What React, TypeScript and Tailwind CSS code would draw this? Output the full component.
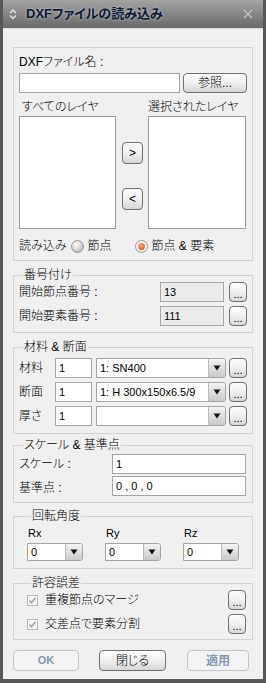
import React from 'react';

const btnFace = 'bg-linear-to-b from-[#fdfdfd] via-[#f0f0f0] to-[#d6d6d6] border border-[#707070]';

const Arrow: React.FC = () => (
   <svg width="8" height="6" viewBox="0 0 8 6" aria-hidden="true">
      <path d="M0.5 0.5 H7.5 L4 5.5 Z" fill="#111" />
   </svg>
);

const Dots: React.FC<{ h?: string }> = ({ h = 'h-[20px]' }) => (
   <button
      className={`${btnFace} w-[18px] ${h} rounded-[4px] shrink-0 flex items-end justify-center pb-[2px] text-[11px] leading-[10px] text-black`}
   >
      ...
   </button>
);

const Select: React.FC<{ value: string; w: string; h?: string }> = ({ value, w, h = 'h-[20px]' }) => (
   <div className={`flex ${w} ${h} shrink-0 border border-[#a5a5a5] bg-white rounded-r-[3px]`}>
      <span className="flex-1 px-[3px] text-[11px] flex items-center whitespace-nowrap overflow-hidden">
         {value}
      </span>
      <span className="w-[17px] border-l border-[#bcbcbc] bg-linear-to-b from-[#f4f4f4] to-[#c9c9c9] rounded-r-[2px] flex items-center justify-center">
         <Arrow />
      </span>
   </div>
);

const Group: React.FC<{ title: string; className?: string; children: React.ReactNode }> = ({
   title,
   className = '',
   children,
}) => (
   <fieldset className={`min-w-0 w-full border border-[#d3d3d3] ${className}`}>
      <legend className="ml-[4px] px-[1px] text-[12px] leading-[14px]">{title}</legend>
      {children}
   </fieldset>
);

const Radio: React.FC<{ checked?: boolean }> = ({ checked }) => (
   <svg width="13" height="13" viewBox="0 0 13 13" aria-hidden="true">
      <defs>
         <radialGradient id="rg" cx="40%" cy="35%" r="70%">
            <stop offset="0" stopColor="#ffffff" />
            <stop offset="1" stopColor="#b4b4b4" />
         </radialGradient>
         <radialGradient id="ro" cx="40%" cy="35%" r="70%">
            <stop offset="0" stopColor="#ffb27a" />
            <stop offset="1" stopColor="#e8501a" />
         </radialGradient>
      </defs>
      <circle cx="6.5" cy="6.5" r="6" fill={checked ? '#f3f3f3' : 'url(#rg)'} stroke="#9a9a9a" />
      {checked && <circle cx="6.5" cy="6.5" r="3.4" fill="url(#ro)" />}
   </svg>
);

const Check: React.FC = () => (
   <span className="w-[11px] h-[11px] shrink-0 border border-[#b8b8b8] bg-[#f6f6f6] flex items-center justify-center">
      <svg width="9" height="9" viewBox="0 0 9 9" aria-hidden="true">
         <path d="M1.5 4.5 L3.5 6.8 L7.5 1.8" fill="none" stroke="#a3a3a3" strokeWidth="1.6" />
      </svg>
   </span>
);

const App: React.FC = () => {
   return (
      <div className="w-[266px] h-[683px] flex flex-col bg-[#585858] px-[3px] pb-[4px] text-black font-light font-['Liberation_Sans','Noto_Sans_CJK_JP',sans-serif] [font-feature-settings:'palt'] overflow-hidden">
         {/* title bar */}
         <div className="h-[29px] shrink-0 flex items-center pl-[6px] pr-[10px] bg-linear-to-b from-[#a4a4a4] to-[#6a6a6a] border-b border-[#dcdcdc]">
            <svg width="8" height="12" viewBox="0 0 8 12" aria-hidden="true">
               <path d="M1 5 L4 2 L7 5 M1 7.5 L4 10.5 L7 7.5" fill="none" stroke="#e4e4e4" strokeWidth="1.4" />
            </svg>
            <span className="ml-[9px] text-[13px] font-bold text-[#0c1936] [text-shadow:0_0_3px_rgba(255,255,255,0.55)]">
               DXFファイルの読み込み
            </span>
            <svg className="ml-auto" width="10" height="10" viewBox="0 0 10 10" aria-hidden="true">
               <path d="M1 1 L9 9 M9 1 L1 9" stroke="#c4c4c4" strokeWidth="1.3" />
            </svg>
         </div>

         {/* body */}
         <div className="flex-1 flex flex-col bg-[#f0f0f0] px-[10px] pt-[18px] text-[12px]">
            <div className="border border-[#d3d3d3] pl-[5px] pr-[5px] pt-[6px] pb-[6px]">
               <div className="leading-[16px]">DXFファイル名 :</div>
               <div className="flex mt-[3px] gap-[3px]">
                  <div className="w-[161px] h-[20px] border border-[#a5a5a5] bg-white" />
                  <button className={`${btnFace} w-[64px] h-[20px] rounded-[4px] text-[12px] leading-[16px]`}>
                     参照...
                  </button>
               </div>
               <div className="flex mt-[6px] leading-[16px]">
                  <span className="w-[129px] pl-[3px]">すべてのレイヤ</span>
                  <span>選択されたレイヤ</span>
               </div>
               <div className="flex mt-[1px]">
                  <div className="w-[97px] h-[113px] border border-[#9c9c9c] bg-white" />
                  <div className="ml-[6px] w-[21px] flex flex-col pt-[26px] gap-[24px]">
                     <button className={`${btnFace} w-[21px] h-[22px] rounded-[4px] text-[12px]`}>&gt;</button>
                     <button className={`${btnFace} w-[21px] h-[22px] rounded-[4px] text-[12px]`}>&lt;</button>
                  </div>
                  <div className="ml-[5px] w-[98px] h-[113px] border border-[#9c9c9c] bg-white" />
               </div>
               <div className="flex items-center mt-[9px] h-[16px]">
                  <span>読み込み</span>
                  <span className="ml-[5px] flex items-center">
                     <Radio />
                  </span>
                  <span className="ml-[3px]">節点</span>
                  <span className="ml-[23px] flex items-center">
                     <Radio checked />
                  </span>
                  <span className="ml-[4px]">節点 &amp; 要素</span>
               </div>
            </div>

            <Group title="番号付け" className="mt-[7px] pl-[5px] pr-[5px] pb-[6px]">
               <div className="flex items-center h-[20px]">
                  <span className="flex-1">開始節点番号 :</span>
                  <div className="w-[64px] h-[20px] border border-[#a9a9a9] bg-[#ececec] px-[3px] text-[11px] flex items-center">
                     13
                  </div>
                  <span className="ml-[5px]">
                     <Dots />
                  </span>
               </div>
               <div className="flex items-center h-[20px] mt-[4px]">
                  <span className="flex-1">開始要素番号 :</span>
                  <div className="w-[64px] h-[20px] border border-[#a9a9a9] bg-[#ececec] px-[3px] text-[11px] flex items-center">
                     111
                  </div>
                  <span className="ml-[5px]">
                     <Dots />
                  </span>
               </div>
            </Group>

            <Group title="材料 & 断面" className="mt-[7px] pl-[5px] pr-[5px] pt-[4px] pb-[7px]">
               {[
                  ['材料', '1: SN400'],
                  ['断面', '1: H 300x150x6.5/9'],
                  ['厚さ', ''],
               ].map(([label, value], i) => (
                  <div key={label} className={`flex items-center h-[20px] ${i > 0 ? 'mt-[4px]' : ''}`}>
                     <span className="w-[36px]">{label}</span>
                     <div className="w-[37px] h-[20px] border border-[#a5a5a5] bg-white px-[3px] text-[11px] flex items-center">
                        1
                     </div>
                     <span className="ml-[4px]">
                        <Select value={value} w="w-[130px]" />
                     </span>
                     <span className="ml-[3px]">
                        <Dots />
                     </span>
                  </div>
               ))}
            </Group>

            <Group title="スケール & 基準点" className="mt-[4px] pl-[5px] pr-[6px] pt-[2px] pb-[6px]">
               <div className="flex items-center h-[20px]">
                  <span className="w-[93px]">スケール :</span>
                  <div className="w-[134px] h-[20px] border border-[#a5a5a5] bg-white px-[3px] text-[11px] flex items-center">
                     1
                  </div>
               </div>
               <div className="flex items-center h-[20px] mt-[2px]">
                  <span className="w-[93px] pt-[3px]">基準点 :</span>
                  <div className="w-[134px] h-[20px] border border-[#a5a5a5] bg-white px-[3px] text-[11px] flex items-center whitespace-pre">
                     0 , 0 , 0
                  </div>
               </div>
            </Group>

            <Group title="回転角度" className="mt-[6px] pl-[13px] pt-[2px] pb-[7px]">
               <div className="flex gap-[22px]">
                  {['Rx', 'Ry', 'Rz'].map((r) => (
                     <div key={r} className="w-[56px] flex flex-col">
                        <span className="pl-[1px] leading-[16px] text-[11px]">{r}</span>
                        <span className="mt-[2px]">
                           <Select value="0" w="w-[56px]" h="h-[18px]" />
                        </span>
                     </div>
                  ))}
               </div>
            </Group>

            <Group title="許容誤差" className="mt-[7px] pl-[13px] pr-[6px] pb-[5px]">
               {['重複節点のマージ', '交差点で要素分割'].map((t, i) => (
                  <div key={t} className={`flex items-center h-[20px] ${i > 0 ? 'mt-[4px]' : ''}`}>
                     <Check />
                     <span className="ml-[7px] flex-1">{t}</span>
                     <Dots />
                  </div>
               ))}
            </Group>

            <div className="flex mt-[10px] h-[21px]">
               <button className="w-[66px] h-[21px] rounded-[4px] border border-[#c4c4c4] bg-[#f4f4f4] text-[11px] font-bold text-[#8597b6]">
                  OK
               </button>
               <button className={`${btnFace} ml-[20px] w-[67px] h-[21px] rounded-[4px] text-[12px]`}>閉じる</button>
               <button className="ml-[21px] w-[62px] h-[21px] rounded-[4px] border border-[#c4c4c4] bg-[#f4f4f4] text-[12px] font-bold text-[#8597b6]">
                  適用
               </button>
            </div>
         </div>
      </div>
   );
};

export default App;
